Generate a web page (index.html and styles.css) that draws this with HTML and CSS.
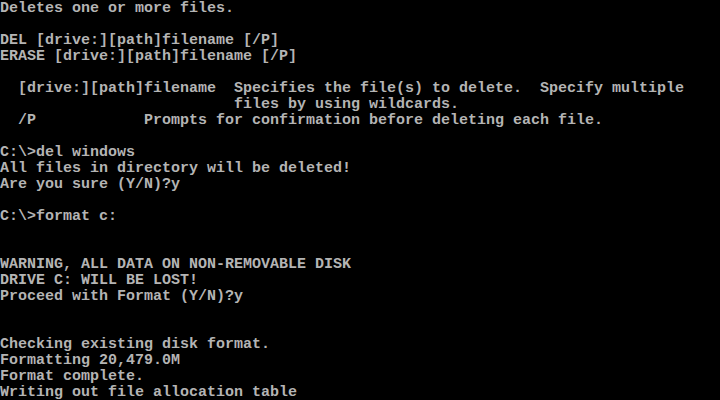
FILE: index.html
```html
<!DOCTYPE html>
<html lang="en">
<head>
    <meta charset="UTF-8">
    <meta name="viewport" content="width=device-width, initial-scale=1.0">
    <title>MS-DOS</title>
    <link rel="stylesheet" href="styles.css">
</head>
<body>
    <pre class="screen">Deletes one or more files.

DEL [drive:][path]filename [/P]
ERASE [drive:][path]filename [/P]

  [drive:][path]filename  Specifies the file(s) to delete.  Specify multiple
                          files by using wildcards.
  /P            Prompts for confirmation before deleting each file.

C:\&gt;del windows
All files in directory will be deleted!
Are you sure (Y/N)?y

C:\&gt;format c:


WARNING, ALL DATA ON NON-REMOVABLE DISK
DRIVE C: WILL BE LOST!
Proceed with Format (Y/N)?y


Checking existing disk format.
Formatting 20,479.0M
Format complete.
Writing out file allocation table</pre>
</body>
</html>
```

FILE: styles.css
```css
* {
    box-sizing: border-box;
}

html, body {
    margin: 0;
    padding: 0;
    background-color: #000;
}

body {
    width: 720px;
    height: 400px;
    overflow: hidden;
}

.screen {
    margin: 0;
    padding: 1px 0 0 0;
    font-family: 'Liberation Mono', 'DejaVu Sans Mono', monospace;
    font-size: 15px;
    font-weight: bold;
    line-height: 16px;
    color: #b4b4b4;
    white-space: pre;
}
```
